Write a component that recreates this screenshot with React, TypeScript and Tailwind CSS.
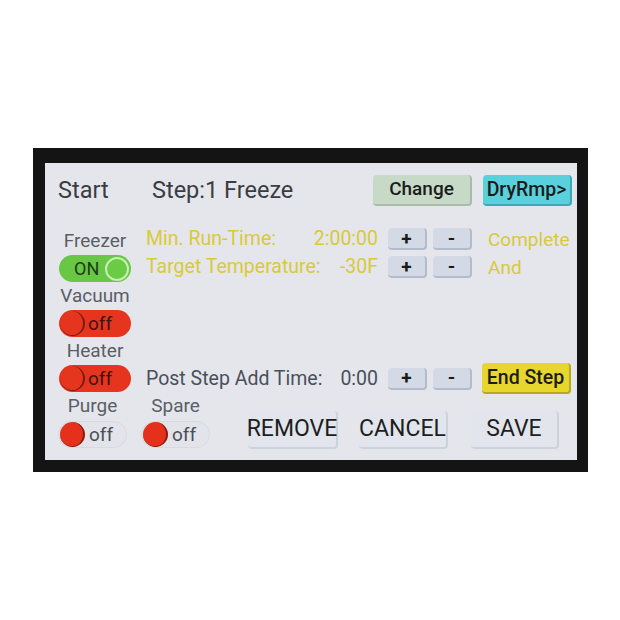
import React from 'react';

const font = { fontFamily: 'Roboto, "Liberation Sans", sans-serif' };

function Toggle({ on, wide = true, flat = false }: { on: boolean; wide?: boolean; flat?: boolean }) {
  if (on) {
    return (
      <div className="flex h-[27px] w-[72px] items-center rounded-full bg-[#68c744] pl-[15px] pr-[2px]">
        <span className="text-[18px] leading-none text-[#1f3a18]">ON</span>
        <div className="ml-auto h-[24px] w-[24px] rounded-full border-[2px] border-[#c9ecb8] bg-[#6acb44]" />
      </div>
    );
  }
  if (flat) {
    return (
      <div className={`flex h-[27px] ${wide ? 'w-[72px]' : 'w-[69px]'} items-center rounded-full border border-[#d6dae2] bg-[#e2e4ea] pl-[1px]`}>
        <div className="h-[25px] w-[25px] rounded-full border-r-[2px] border-b border-[#8c1a10] bg-[#e5301c]" />
        <span className="ml-[4px] text-[19px] leading-none text-[#4a4e58]">off</span>
      </div>
    );
  }
  return (
    <div className="flex h-[27px] w-[72px] items-center rounded-full bg-[#e5351f] pl-[1px]">
      <div className="h-[25px] w-[25px] rounded-full border-r-[2px] border-b border-[#7a1a10] bg-[#e5351f]" />
      <span className="ml-[3px] text-[19px] leading-none text-[#3a1410]">off</span>
    </div>
  );
}

function StepBtn({ label }: { label: string }) {
  return (
    <div className="flex h-full w-[39px] items-center justify-center rounded-[4px] border-r-[2px] border-b-[2px] border-[#b3bccb] bg-[#d4dae5] text-[19px] font-bold leading-none text-[#1a1a1a]">
      {label}
    </div>
  );
}

function ParamRow({
  label,
  value,
  after,
  yellow = true,
  className = '',
}: {
  label: string;
  value: string;
  after: React.ReactNode;
  yellow?: boolean;
  className?: string;
}) {
  const color = yellow ? 'text-[#dac93a]' : 'text-[#4a4f5c]';
  return (
    <div className={`flex items-center ${className}`}>
      <div className={`flex w-[232px] justify-between text-[19.5px] leading-none ${color}`}>
        <span>{label}</span>
        <span>{value}</span>
      </div>
      <div className="ml-[10px] h-[22px]">
        <StepBtn label="+" />
      </div>
      <div className="ml-[6px] h-[22px]">
        <StepBtn label="-" />
      </div>
      {after}
    </div>
  );
}

function Label({ text }: { text: string }) {
  return <div className="h-[20px] whitespace-nowrap text-[19px] leading-[20px] text-[#5a5e66]">{text}</div>;
}

export default function App() {
  return (
    <div className="h-[620px] w-[620px] bg-white pl-[33px] pt-[148px]" style={font}>
      <div className="h-[324px] w-[555px] bg-[#141414] pb-[12px] pl-[12px] pr-[10px] pt-[15px]">
        <div className="h-[297px] w-[532px] bg-[#e4e6ec] pl-[13px] pr-[5px] pt-[12px]">
          {/* header */}
          <div className="flex h-[31px] items-center text-[23.5px] text-[#3a3c42]">
            <span className="w-[94px]">Start</span>
            <span>Step:1 Freeze</span>
            <div className="ml-auto flex h-full w-[99px] items-center justify-center rounded-[4px] border-r-[2px] border-b-[2px] border-[#a9bca9] bg-[#c6dac7] text-[19px] font-medium text-[#1c1c1c]">
              Change
            </div>
            <div className="ml-[11px] flex h-full w-[89px] items-center justify-center rounded-[4px] border-r-[2px] border-b-[2px] border-[#3ba9b6] bg-[#5bd0dd] text-[19.5px] font-medium text-[#1c1c1c]">
              DryRmp&gt;
            </div>
          </div>

          {/* middle */}
          <div className="mt-[22px] flex items-start">
            <div className="flex w-[74px] flex-col items-center pt-[3px]">
              <Label text="Freezer" />
              <div className="mt-[4px]"><Toggle on /></div>
              <div className="mt-[4px]"><Label text="Vacuum" /></div>
              <div className="mt-[4px]"><Toggle on={false} /></div>
              <div className="mt-[4px]"><Label text="Heater" /></div>
              <div className="mt-[4px]"><Toggle on={false} /></div>
            </div>
            <div className="ml-[14px] flex flex-col">
              <ParamRow
                label="Min. Run-Time:"
                value="2:00:00"
                after={<span className="ml-[16px] text-[19px] leading-none text-[#dac93a]">Complete</span>}
              />
              <ParamRow
                className="mt-[6px]"
                label="Target Temperature:"
                value="-30F"
                after={<span className="ml-[16px] text-[19px] leading-none text-[#dac93a]">And</span>}
              />
              <ParamRow
                className="mt-[85px] h-[31px]"
                yellow={false}
                label="Post Step Add Time:"
                value="0:00"
                after={
                  <div className="ml-[10px] flex h-[31px] w-[89px] items-center justify-center rounded-[4px] border-r-[2px] border-b-[2px] border-[#b9a91c] bg-[#e6d62e] text-[19.5px] font-medium text-[#1c1c1c]">
                    End Step
                  </div>
                }
              />
            </div>
          </div>

          {/* bottom */}
          <div className="mt-[2px] flex items-start">
            <div className="flex gap-[14px]">
              <div className="flex flex-col items-center">
                <Label text="Purge" />
                <div className="mt-[5px]"><Toggle on={false} flat wide={false} /></div>
              </div>
              <div className="flex flex-col items-center">
                <Label text="Spare" />
                <div className="mt-[5px]"><Toggle on={false} flat wide={false} /></div>
              </div>
            </div>
            <div className="ml-[38px] mt-[15px] flex gap-[21px] text-[23px] text-[#1e1e22]">
              <div className="flex h-[38px] w-[90px] items-center justify-center rounded-[4px] border-r-[2px] border-b-[2px] border-[#ccd2dc] bg-[#e2e5eb]">REMOVE</div>
              <div className="flex h-[38px] w-[89px] items-center justify-center rounded-[4px] border-r-[2px] border-b-[2px] border-[#ccd2dc] bg-[#e2e5eb]">CANCEL</div>
              <div className="ml-[2px] flex h-[38px] w-[88px] items-center justify-center rounded-[4px] border-r-[2px] border-b-[2px] border-[#ccd2dc] bg-[#e2e5eb]">SAVE</div>
            </div>
          </div>
        </div>
      </div>
    </div>
  );
}
